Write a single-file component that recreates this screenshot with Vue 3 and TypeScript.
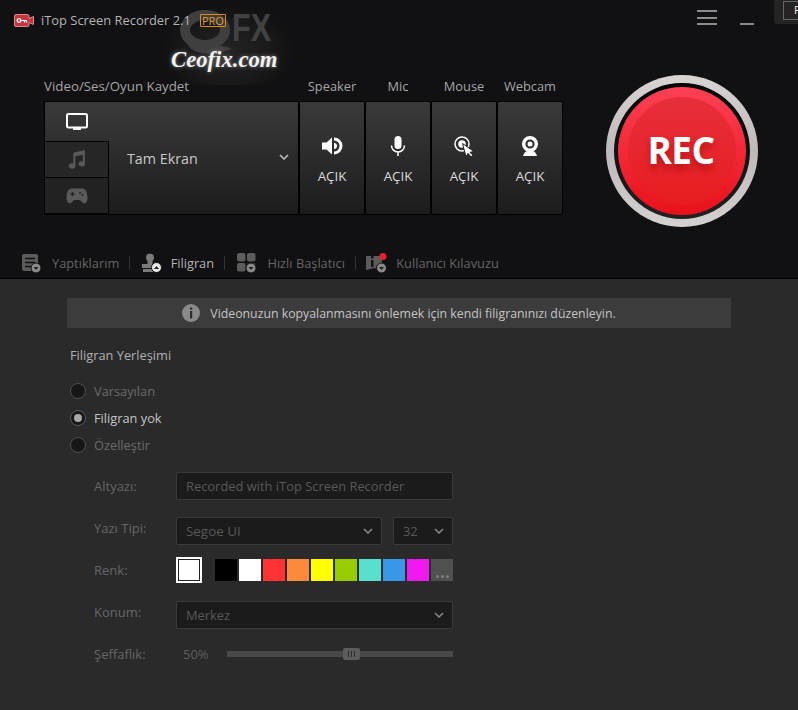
<script setup lang="ts">
const sources = ['Speaker', 'Mic', 'Mouse', 'Webcam']
const colors = ['#000000', '#ffffff', '#ff3333', '#fb8a3a', '#ffff00', '#99cc00', '#58e0cf', '#3a96e6', '#f01af0']
</script>

<template>
  <div class="app">
    <header class="top">
      <div class="watermark">
        <svg class="wm-mark" viewBox="0 0 95 50" width="95" height="50">
          <ellipse cx="25" cy="24" rx="20" ry="15" fill="none" stroke="#3f3f3f" stroke-width="10"/>
          <path d="M6 35C22 45 38 35 52 43C40 47 34 49 22 47C13 46 8 41 6 35z" fill="#3f3f3f"/>
          <text x="52" y="35" class="wm-fx" textLength="39" lengthAdjust="spacingAndGlyphs">FX</text>
        </svg>
        <span class="wm-text">Ceofix.com</span>
      </div>

      <div class="title-row">
        <svg class="logo" viewBox="0 0 20 13" width="20" height="13">
          <path d="M2 .5h11.500A1.500 1.500 0 0 1 15 2v2.500L19.500 2.500v8L15 8.500V11a1.500 1.500 0 0 1-1.500 1.500H2A1.500 1.500 0 0 1 .5 11V2A1.500 1.500 0 0 1 2 .5z" fill="#c8343c" stroke="#d98a8e" stroke-width="1"/>
          <circle cx="5" cy="6.500" r="1.800" fill="none" stroke="#fff" stroke-width="1.300"/>
          <path d="M6.800 6.500H13M10.500 6.500v2M12.500 6.500v2" stroke="#fff" stroke-width="1.200" fill="none"/>
        </svg>
        <span class="app-name">iTop Screen Recorder 2.1</span>
        <span class="pro">PRO</span>
      </div>

      <div class="window-btns">
        <span class="burger"><i></i><i></i><i></i></span>
        <span class="minimize"></span>
      </div>
      <div class="corner"><span>F</span></div>

      <div class="control-row">
        <div class="control-left">
          <div class="labels">
            <span class="label-main">Video/Ses/Oyun Kaydet</span>
            <span v-for="s in sources" :key="s" class="label-src">{{ s }}</span>
          </div>
          <div class="panels">
            <div class="capture">
              <div class="tabs">
                <div class="tab active">
                  <svg viewBox="0 0 22 18" width="22" height="18">
                    <rect x="1" y="1" width="20" height="13.500" rx="1.500" fill="none" stroke="#fff" stroke-width="2"/>
                    <rect x="7" y="15" width="8" height="2" fill="#fff"/>
                  </svg>
                </div>
                <div class="tab">
                  <svg viewBox="0 0 20 20" width="21" height="21">
                    <path d="M7 3.500 18 1v13.200a3 2.400 0 1 1-2-2.300V5.500L9 7v9.200a3.200 2.500 0 1 1-2-2.300z" fill="#5a5a5a"/>
                  </svg>
                </div>
                <div class="tab">
                  <svg viewBox="0 0 22 18" width="22" height="18">
                    <path d="M6 1.500h10c3 0 4.500 2 5 5 .6 3.500 1 6-.5 8.500-1.500 2-3.500 1.500-5-.5L14 13H8l-1.500 1.500c-1.500 2-3.500 2.500-5 .5C0 12.500.4 10 1 6.500c.5-3 2-5 5-5z" fill="#5a5a5a"/>
                    <path d="M6.500 5v4M4.500 7h4" stroke="#222" stroke-width="1.300"/>
                    <circle cx="14" cy="5.800" r="1" fill="#222"/><circle cx="16.500" cy="8" r="1" fill="#222"/>
                  </svg>
                </div>
              </div>
              <div class="capture-select">
                <span>Tam Ekran</span>
                <svg class="chev" viewBox="0 0 10 6" width="10" height="6"><path d="M1 1l4 4 4-4" fill="none" stroke="#bbb" stroke-width="1.600"/></svg>
              </div>
            </div>

            <button class="src-btn">
              <svg viewBox="0 0 22 20" width="22" height="20">
                <path d="M1 6.500h4.500L11 1.500v17l-5.500-5H1z" fill="#fff"/>
                <path d="M13 1.500a8.500 8.500 0 0 1 0 17v-3a5.500 5.500 0 0 0 0-11z" fill="#fff"/>
                <path d="M13 7a3 3 0 0 1 0 6z" fill="#fff"/>
              </svg>
              <span>AÇIK</span>
            </button>
            <button class="src-btn">
              <svg viewBox="0 0 22 20" width="22" height="20">
                <rect x="7.500" y="0" width="7" height="13" rx="3.500" fill="#fff"/>
                <path d="M4.500 9.500a6.500 6.500 0 0 0 13 0M11 16v4" fill="none" stroke="#fff" stroke-width="1.500"/>
              </svg>
              <span>AÇIK</span>
            </button>
            <button class="src-btn">
              <svg viewBox="0 0 22 20" width="22" height="20">
                <circle cx="9" cy="8" r="7" fill="none" stroke="#fff" stroke-width="1.500"/>
                <circle cx="9" cy="8" r="3.800" fill="#fff"/>
                <path d="M9.500 7.500 21 15.500l-4 .8 3 3-2 1.500-3-3.500-2 3.500z" fill="#fff" stroke="#222" stroke-width="1"/>
              </svg>
              <span>AÇIK</span>
            </button>
            <button class="src-btn">
              <svg viewBox="0 0 22 20" width="22" height="20">
                <circle cx="11" cy="8" r="6.300" fill="none" stroke="#fff" stroke-width="3.400"/>
                <circle cx="11" cy="8" r="2.500" fill="#fff"/>
                <path d="M4 20c.8-3 2.500-4.500 4-5h6c1.500.5 3.200 2 4 5z" fill="#fff"/>
              </svg>
              <span>AÇIK</span>
            </button>
          </div>
        </div>

        <button class="rec">
          <span class="rec-gap">
            <span class="rec-red">
              <span class="rec-inner">REC</span>
            </span>
          </span>
        </button>
      </div>

      <nav class="nav">
        <a class="nav-item">
          <svg viewBox="0 0 21 20" width="21" height="20">
            <rect x="0" y="1" width="16" height="17" rx="2" fill="#5c5c5c"/>
            <path d="M3 5.500h10M3 9.500h10M3 13.500h6" stroke="#111" stroke-width="1.500"/>
            <circle cx="14" cy="15" r="5" fill="#8a8a8a" stroke="#111" stroke-width="1"/>
            <path d="M11.500 14h5L14 17z" fill="#222"/>
          </svg>
          <span>Yaptıklarım</span>
        </a>
        <i class="sep"></i>
        <a class="nav-item current">
          <svg viewBox="0 0 21 20" width="21" height="20">
            <circle cx="9" cy="4.500" r="4" fill="#7a7a7a"/>
            <path d="M6.500 7h5v4H17v4H1v-4h5.500z" fill="#7a7a7a"/>
            <rect x="2" y="16" width="14" height="3" fill="#7a7a7a"/>
            <circle cx="15.500" cy="14.500" r="5" fill="#e8e8e8" stroke="#111" stroke-width="1"/>
            <path d="M13 16h5L15.500 13z" fill="#222"/>
          </svg>
          <span>Filigran</span>
        </a>
        <i class="sep"></i>
        <a class="nav-item quick">
          <svg viewBox="0 0 21 20" width="21" height="20">
            <rect x="0" y="0" width="8.500" height="8.500" rx="2" fill="#5c5c5c"/>
            <rect x="10" y="0" width="8.500" height="8.500" rx="2" fill="#5c5c5c"/>
            <rect x="0" y="10" width="8.500" height="8.500" rx="2" fill="#5c5c5c"/>
            <rect x="10" y="10" width="8.500" height="8.500" rx="2" fill="#5c5c5c"/>
            <circle cx="14" cy="15" r="5" fill="#8a8a8a" stroke="#111" stroke-width="1"/>
            <path d="M11.500 14h5L14 17z" fill="#222"/>
          </svg>
          <span>Hızlı Başlatıcı</span>
        </a>
        <i class="sep"></i>
        <a class="nav-item">
          <svg viewBox="0 0 21 20" width="21" height="20">
            <path d="M0 3h16v14l-8-2-8 2z" fill="#5c5c5c"/>
            <rect x="5" y="3" width="2.500" height="2.500" fill="#111"/>
            <rect x="5" y="7" width="2.500" height="7" fill="#111"/>
            <circle cx="15.500" cy="15" r="5" fill="#8a8a8a" stroke="#111" stroke-width="1"/>
            <path d="M13 14h5L15.500 17z" fill="#222"/>
            <circle cx="17" cy="3.500" r="3.500" fill="#e8202a"/>
          </svg>
          <span>Kullanıcı Kılavuzu</span>
        </a>
      </nav>
    </header>

    <main class="body">
      <div class="banner">
        <svg viewBox="0 0 18 18" width="18" height="18">
          <circle cx="9" cy="9" r="9" fill="#8a8a8a"/>
          <rect x="8" y="3.500" width="2.200" height="2.200" fill="#2d2d2d"/>
          <rect x="8" y="7" width="2.200" height="7.500" fill="#2d2d2d"/>
        </svg>
        <span>Videonuzun kopyalanmasını önlemek için kendi filigranınızı düzenleyin.</span>
      </div>

      <h2 class="section">Filigran Yerleşimi</h2>

      <div class="radios">
        <label class="radio"><i class="dot"></i><span>Varsayılan</span></label>
        <label class="radio on"><i class="dot"></i><span>Filigran yok</span></label>
        <label class="radio"><i class="dot"></i><span>Özelleştir</span></label>
      </div>

      <div class="form">
        <div class="row r-caption">
          <span class="name">Altyazı:</span>
          <div class="field grow">Recorded with iTop Screen Recorder</div>
        </div>
        <div class="row r-font">
          <span class="name">Yazı Tipi:</span>
          <div class="field select font">Segoe UI
            <svg viewBox="0 0 10 6" width="10" height="6"><path d="M1 1l4 4 4-4" fill="none" stroke="#8a8a8a" stroke-width="1.500"/></svg>
          </div>
          <div class="field select size">32
            <svg viewBox="0 0 10 6" width="10" height="6"><path d="M1 1l4 4 4-4" fill="none" stroke="#8a8a8a" stroke-width="1.500"/></svg>
          </div>
        </div>
        <div class="row r-color">
          <span class="name">Renk:</span>
          <span class="current-color"><i></i></span>
          <div class="swatches">
            <i v-for="c in colors" :key="c" class="swatch" :style="{ background: c }"></i>
            <i class="swatch more"><b></b><b></b><b></b></i>
          </div>
        </div>
        <div class="row r-pos">
          <span class="name">Konum:</span>
          <div class="field select grow">Merkez
            <svg viewBox="0 0 10 6" width="10" height="6"><path d="M1 1l4 4 4-4" fill="none" stroke="#8a8a8a" stroke-width="1.500"/></svg>
          </div>
        </div>
        <div class="row r-opacity">
          <span class="name">Şeffaflık:</span>
          <span class="pct">50%</span>
          <div class="slider"><span class="thumb"><i></i><i></i><i></i></span></div>
        </div>
      </div>
    </main>
  </div>
</template>

<style scoped>
.app {
  width: 798px;
  height: 710px;
  overflow: hidden;
  display: flex;
  flex-direction: column;
  font-family: "Open Sans", "Noto Sans", sans-serif;
  font-size: 13px;
  background: #2a2a2a;
}
.top {
  position: relative;
  isolation: isolate;
  height: 279px;
  flex: none;
  box-sizing: border-box;
  background: #111012;
  border-bottom: 1px solid #000;
}
.title-row {
  display: flex;
  align-items: center;
  height: 40px;
  padding-left: 14px;
}
.logo { margin-right: 7px; }
.app-name { color: #b4b4b4; font-size: 12.900px; }
.pro {
  margin-left: 9px;
  border: 1px solid #d98a1f;
  border-radius: 1px;
  color: #e09a2a;
  font-size: 11px;
  line-height: 11px;
  width: 26px;
  text-align: center;
  box-sizing: border-box;
  height: 13px;
}
.watermark {
  position: absolute;
  z-index: -1;
  left: 163px;
  top: 5px;
  width: 130px;
  height: 80px;
  background: radial-gradient(ellipse at 50% 58%, #232323 0, #1a1a1a 45%, #111012 72%);
}
.wm-mark { position: absolute; left: 17px; top: 1px; }
.wm-fx { font: bold 38px "Liberation Sans", sans-serif; fill: #424242; }
.wm-text {
  position: absolute;
  left: 8px;
  top: 42px;
  font: italic bold 22.700px "Liberation Serif", serif;
  color: #f2f2f2;
  text-shadow: 0 0 4px rgba(255,255,255,.45);
}
.window-btns {
  position: absolute;
  left: 697px;
  top: 10px;
  display: flex;
  gap: 23px;
  align-items: flex-end;
}
.burger { display: flex; flex-direction: column; gap: 4.500px; width: 20px; }
.burger i { height: 2px; background: #8c8c8c; display: block; }
.minimize { width: 14px; height: 2px; background: #8c8c8c; }
.corner {
  position: absolute;
  right: 0;
  top: 0;
  width: 24px;
  height: 24px;
  background: #242424;
  border-radius: 0 0 0 3px;
  box-sizing: border-box;
  padding: 1px 0 0 9px;
  overflow: hidden;
}
.corner span {
  display: block;
  height: 17px;
  border: 1px solid #666;
  border-right: 0;
  color: #eee;
  font-size: 11px;
  padding-left: 10px;
  line-height: 16px;
}
.control-row {
  display: flex;
  align-items: flex-start;
  padding-left: 44px;
  margin-top: 35px;
}
.control-left { width: 519px; }
.labels {
  display: flex;
  box-sizing: border-box;
  height: 27px;
  padding-bottom: 2px;
  align-items: center;
  color: #a6a6a6;
  font-size: 12.800px;
  line-height: 1;
  margin-top: -1px;
}
.label-main { width: 255px; white-space: nowrap; font-size: 13.300px; }
.label-src { width: 66px; text-align: center; }
.panels { display: flex; height: 114px; }
.capture {
  width: 255px;
  display: flex;
  box-sizing: border-box;
  background: linear-gradient(#3a3a3a, #1c1c1c);
  border: 1px solid #000;
  border-radius: 2px 0 0 2px;
}
.tabs { width: 64px; display: flex; flex-direction: column; flex: none; }
.tab { display: flex; align-items: center; justify-content: center; box-sizing: border-box; }
.tab:nth-child(1) { height: 39px; }
.tab:nth-child(2) { height: 36px; background: #262626; border: 1px solid #000; border-width: 1px 1px 0 0; }
.tab:nth-child(3) { height: 37px; background: #222; border: 1px solid #000; border-width: 1px 1px 1px 0; }
.capture-select {
  flex: 1;
  display: flex;
  align-items: center;
  justify-content: space-between;
  padding: 0 9px 0 18px;
  color: #c8c8c8;
  font-size: 14.300px;
}
.chev { margin-top: -2px; }
.src-btn {
  width: 66px;
  box-sizing: border-box;
  border: 1px solid #000;
  border-radius: 2px;
  background: linear-gradient(#3a3a3a, #1c1c1c);
  display: flex;
  flex-direction: column;
  align-items: center;
  color: #dcdcdc;
  font: inherit;
  font-size: 13.300px;
  padding: 34px 0 0;
  gap: 12px;
  line-height: 17px;
}
.rec {
  width: 152px;
  height: 152px;
  padding: 0;
  margin-left: 43px;
  flex: none;
  border: 0;
  border-radius: 50%;
  font-family: inherit;
  background: linear-gradient(#d9d4d4, #bfb8b8 50%, #d6d1d1);
  display: flex;
  align-items: center;
  justify-content: center;
}
.rec-gap {
  width: 136px;
  height: 136px;
  border-radius: 50%;
  background: linear-gradient(#000, #222);
  display: flex;
  align-items: center;
  justify-content: center;
}
.rec-red {
  width: 128px;
  height: 128px;
  border-radius: 50%;
  background: linear-gradient(#ff4054, #e8111a);
  display: flex;
  align-items: center;
  justify-content: center;
}
.rec-inner {
  width: 108px;
  height: 108px;
  border-radius: 50%;
  box-sizing: border-box;
  padding: 0 2px 4px 0;
  background: linear-gradient(#e62f3b, #e81c20);
  color: #fff;
  font-weight: 700;
  font-size: 37px;
  letter-spacing: -0.500px;
  display: flex;
  align-items: center;
  justify-content: center;
  text-shadow: 0 5px 6px rgba(120,0,0,.45);
}
.nav {
  position: absolute;
  left: 22px;
  top: 252px;
  display: flex;
  align-items: center;
  height: 22px;
  color: #666;
}
.nav-item { display: flex; align-items: center; gap: 9px; font-size: 12.800px; white-space: nowrap; }
.nav-item.current { color: #b4b4b4; }
.nav-item.quick { margin-left: 2px; }
.sep { display: block; width: 1px; height: 14px; background: #333; margin: 0 10.200px; }
.body { flex: 1; padding: 19px 67px 0; }
.banner {
  height: 30px;
  background: #3c3c3c;
  display: flex;
  align-items: center;
  justify-content: center;
  gap: 10px;
  color: #c4c4c4;
  font-size: 12.300px;
}
.section {
  margin: 18px 0 0 3px;
  font-weight: 400;
  font-size: 12.800px;
  line-height: 18px;
  color: #b0b0b0;
}
.radios { margin: 19px 0 0 3px; display: flex; flex-direction: column; gap: 11px; }
.radio { display: flex; align-items: center; gap: 8px; height: 16px; color: #6a6a6a; font-size: 12.800px; }
.radio.on { color: #c4c4c4; }
.dot {
  width: 16px;
  height: 16px;
  box-sizing: border-box;
  border-radius: 50%;
  background: #171717;
  border: 1px solid #505050;
  display: flex;
  align-items: center;
  justify-content: center;
}
.radio.on .dot { border-color: #5a5a5a; }
.radio.on .dot::after { content: ""; width: 8px; height: 8px; border-radius: 50%; background: #a8a8a8; }
.form { margin: 19px 0 0 27px; color: #666; }
.row { display: flex; align-items: center; }
.name { width: 82px; flex: none; color: #666; font-size: 13px; }
.field {
  box-sizing: border-box;
  height: 28px;
  background: #1b1b1b;
  border: 1px solid #3b3b3b;
  border-radius: 2px;
  color: #595959;
  display: flex;
  align-items: center;
  padding: 0 9px;
  font-size: 12.900px;
  width: 277px;
  white-space: nowrap;
}
.select { justify-content: space-between; padding-right: 8px; }
.font { width: 206px; font-size: 13.400px; }
.size { width: 60px; margin-left: 11px; }
.r-font { margin-top: 17px; }
.r-font .name { margin-top: -6px; }
.r-color { margin-top: 12px; height: 26px; }
.current-color {
  box-sizing: border-box;
  width: 26px;
  height: 26px;
  border: 2px solid #fff;
  padding: 1px;
  background: #222;
  display: block;
}
.current-color i { display: block; height: 100%; background: #fff; }
.swatches { display: flex; gap: 2px; margin-left: 13px; }
.swatch { display: block; width: 22px; height: 22px; }
.more {
  background: #505050;
  display: flex;
  align-items: flex-end;
  justify-content: center;
  gap: 2px;
  padding-bottom: 3px;
  box-sizing: border-box;
}
.more b { display: block; width: 3px; height: 3px; border-radius: 50%; background: #7e7e7e; }
.r-pos { margin-top: 18px; }
.r-pos .name { margin-top: -6px; }
.r-opacity { margin-top: 15px; height: 20px; }
.pct { width: 44px; margin-left: 7px; color: #5f5f5f; flex: none; }
.slider {
  position: relative;
  width: 226px;
  height: 6px;
  background: #484848;
}
.thumb {
  position: absolute;
  left: 116px;
  top: -3px;
  width: 17px;
  height: 12px;
  border-radius: 2px;
  background: #5c5c5c;
  display: flex;
  align-items: center;
  justify-content: center;
  gap: 2px;
}
.thumb i { display: block; width: 1px; height: 6px; background: #2d2d2d; }
</style>
